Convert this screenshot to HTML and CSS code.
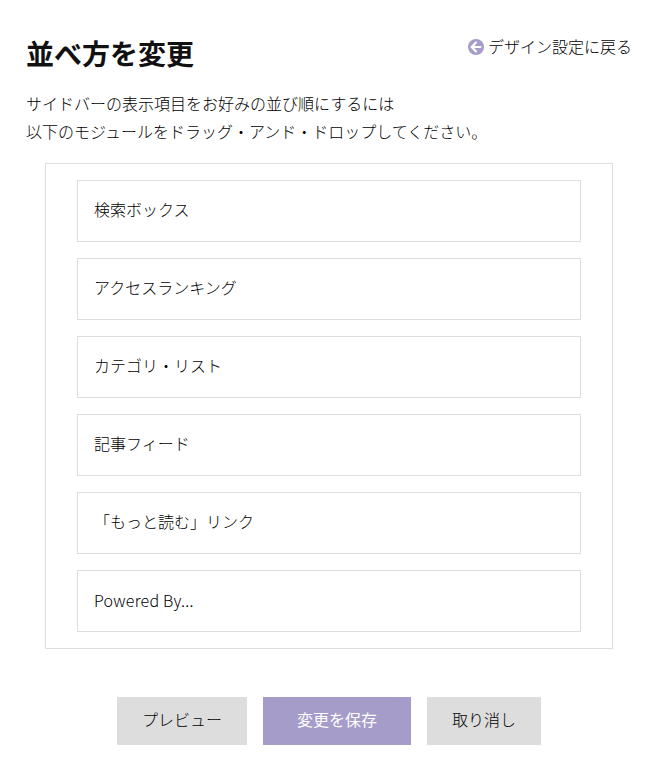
FILE: index.html
```html
<!DOCTYPE html>
<html lang="ja">
<head>
    <meta charset="UTF-8">
    <meta name="viewport" content="width=device-width, initial-scale=1.0">
    <title>並べ方を変更</title>
    <link rel="stylesheet" href="styles.css">
</head>
<body>

<div class="header">
    <h1>並べ方を変更</h1>
    <a class="back" href="#">
        <svg width="16" height="16" viewBox="0 0 16 16">
            <circle cx="8" cy="8" r="8"/>
            <path d="M12.4 8H3.8M8 3.6L3.6 8L8 12.4"/>
        </svg>
        <span>デザイン設定に戻る</span>
    </a>
</div>

<p class="description">サイドバーの表示項目をお好みの並び順にするには<br>以下のモジュールをドラッグ・アンド・ドロップしてください。</p>

<ul class="modules">
    <li class="module" draggable="true">検索ボックス</li>
    <li class="module" draggable="true">アクセスランキング</li>
    <li class="module" draggable="true">カテゴリ・リスト</li>
    <li class="module" draggable="true">記事フィード</li>
    <li class="module" draggable="true">「もっと読む」リンク</li>
    <li class="module powered" draggable="true">Powered By...</li>
</ul>

<div class="buttons">
    <button class="btn preview">プレビュー</button>
    <button class="btn save">変更を保存</button>
    <button class="btn cancel">取り消し</button>
</div>

</body>
</html>
```
FILE: styles.css
```css
* {
    box-sizing: border-box;
}
body {
    margin: 0;
    padding: 32px 38px 0 26px;
    background: #fff;
    color: #000;
    font-family: "Noto Sans CJK JP", sans-serif;
    font-size: 16px;
    font-weight: 300;
    line-height: 28px;
}
.header {
    display: flex;
    justify-content: space-between;
    align-items: flex-start;
}
h1 {
    margin: 0;
    color: #111;
    font-size: 28px;
    font-weight: 700;
    line-height: 42px;
}
.back {
    display: flex;
    align-items: center;
    gap: 4px;
    color: #000;
    text-decoration: none;
}
.back svg {
    margin-top: 2px;
}
.back svg circle {
    fill: #a69cc9;
}
.back svg path {
    fill: none;
    stroke: #fff;
    stroke-width: 2.1;
    stroke-linecap: round;
    stroke-linejoin: round;
}
.description {
    margin: 15px 0 18px;
}
.modules {
    display: flex;
    flex-direction: column;
    gap: 16px;
    width: 568px;
    margin: 0 0 48px 19px;
    padding: 16px 31px;
    border: 1px solid #ddd;
    list-style: none;
}
.module {
    height: 62px;
    padding: 0 16px;
    border: 1px solid #ddd;
    line-height: 57px;
    cursor: move;
}
.powered {
    line-height: 58px;
    letter-spacing: 0.25px;
}
.buttons {
    display: flex;
    gap: 16px;
    margin-left: 91px;
}
.btn {
    width: 130px;
    height: 48px;
    padding: 0 0 5px;
    border: none;
    background: #ddd;
    color: #000;
    font: inherit;
    cursor: pointer;
}
.save {
    width: 148px;
    background: #a69cc9;
    color: #fff;
    font-weight: 400;
}
.cancel {
    width: 114px;
}
```
